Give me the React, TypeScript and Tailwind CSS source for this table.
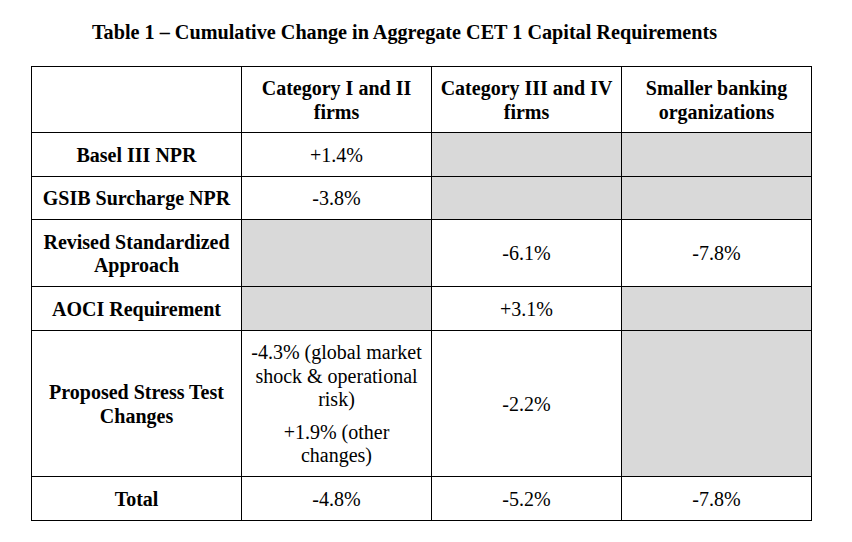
import React from 'react';

type Cell = { text?: React.ReactNode; grey?: boolean };

const rows: { label: React.ReactNode; h: string; cells: Cell[] }[] = [
    { label: 'Basel III NPR', h: 'h-[44px]', cells: [{ text: '+1.4%' }, { grey: true }, { grey: true }] },
    { label: 'GSIB Surcharge NPR', h: 'h-[43px]', cells: [{ text: '-3.8%' }, { grey: true }, { grey: true }] },
    {
        label: <>Revised Standardized<br />Approach</>,
        h: 'h-[67px]',
        cells: [{ grey: true }, { text: '-6.1%' }, { text: '-7.8%' }],
    },
    { label: 'AOCI Requirement', h: 'h-[44px]', cells: [{ grey: true }, { text: '+3.1%' }, { grey: true }] },
    {
        label: <>Proposed Stress Test<br />Changes</>,
        h: 'h-[146px]',
        cells: [
            {
                text: (
                    <div className="flex flex-col gap-[9px]">
                        <p>-4.3% (global market shock &amp; operational risk)</p>
                        <p>+1.9% (other changes)</p>
                    </div>
                ),
            },
            { text: '-2.2%' },
            { grey: true },
        ],
    },
    { label: 'Total', h: 'h-[44px]', cells: [{ text: '-4.8%' }, { text: '-5.2%' }, { text: '-7.8%' }] },
];

const App: React.FC = () => {
    return (
        <div className="w-[852px] h-[542px] bg-white text-black font-['Liberation_Serif',serif] text-[20px] leading-[23.5px]">
            <h1 className="pl-[92px] pt-[21px] h-[66px] font-bold text-[20.2px] whitespace-nowrap">
                Table 1 – Cumulative Change in Aggregate CET 1 Capital Requirements
            </h1>
            <table className="ml-[31px] border-collapse table-fixed w-[781px]">
                <colgroup>
                    <col className="w-[210px]" />
                    <col className="w-[190px]" />
                    <col className="w-[190px]" />
                    <col className="w-[190px]" />
                </colgroup>
                <thead>
                    <tr className="h-[66px]">
                        <th className="border border-black"></th>
                        <th className="border border-black font-bold px-[5px] pt-[2px]">Category I and II firms</th>
                        <th className="border border-black font-bold px-[5px] pt-[2px]">Category III and IV firms</th>
                        <th className="border border-black font-bold px-[5px] pt-[2px]">Smaller banking organizations</th>
                    </tr>
                </thead>
                <tbody>
                    {rows.map((r, i) => (
                        <tr key={i} className={r.h}>
                            <td className="border border-black font-bold text-center px-[4px] pt-[2px]">{r.label}</td>
                            {r.cells.map((c, j) => (
                                <td
                                    key={j}
                                    className={`border border-black text-center px-[8px] pt-[2px] ${c.grey ? 'bg-[#d9d9d9]' : ''}`}
                                >
                                    {c.text}
                                </td>
                            ))}
                        </tr>
                    ))}
                </tbody>
            </table>
        </div>
    );
};

export default App;
